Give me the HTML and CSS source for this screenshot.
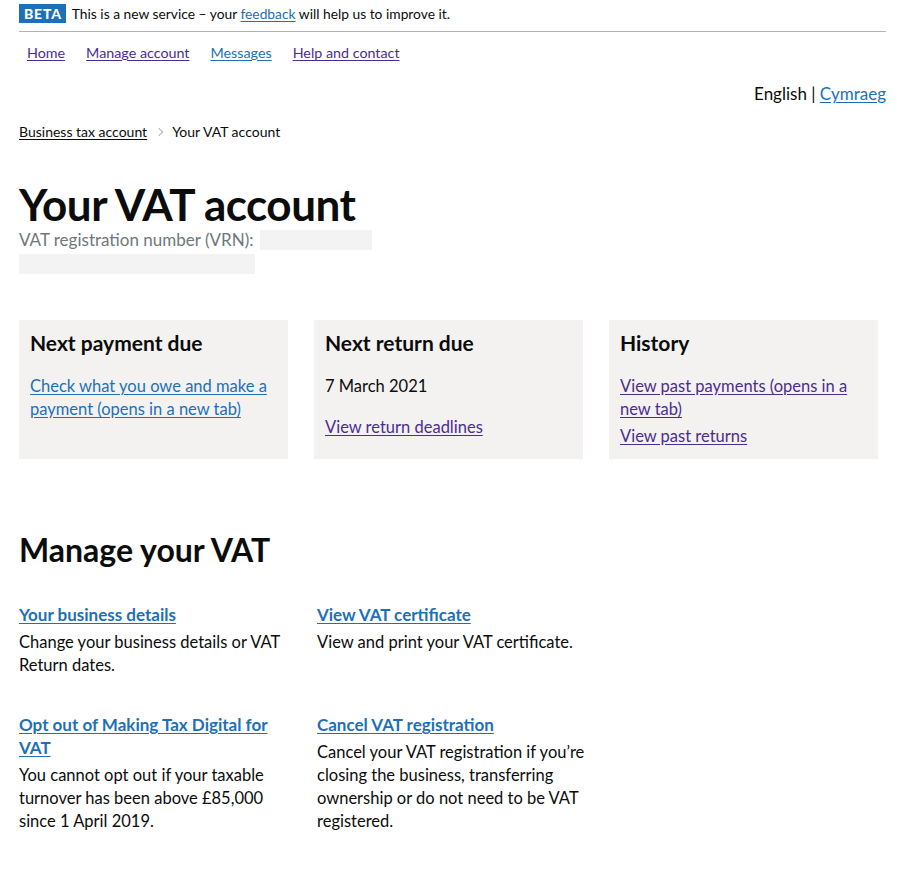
FILE: index.html
```html
<!DOCTYPE html>
<html lang="en">
<head>
<meta charset="utf-8">
<title>Your VAT account</title>
<link rel="stylesheet" href="styles.css">
</head>
<body>
<div class="page">
  <div class="phase">
    <strong class="tag">BETA</strong>
    <span class="phase-text">This is a new service – your <a class="link" href="#">feedback</a> will help us to improve it.</span>
  </div>
  <nav class="nav">
    <a class="visited" href="#">Home</a>
    <a class="visited" href="#">Manage account</a>
    <a class="link" href="#">Messages</a>
    <a class="visited" href="#">Help and contact</a>
  </nav>
  <div class="lang">English | <a class="link" href="#">Cymraeg</a></div>
  <div class="crumbs">
    <a class="crumb-link" href="#">Business tax account</a>
    <span class="chev"></span>
    <span>Your VAT account</span>
  </div>
  <h1 class="title">Your VAT account</h1>
  <div class="vrn">
    <span>VAT registration number (VRN):</span>
    <span class="redact r1"></span>
  </div>
  <div class="redact r2"></div>

  <div class="cards">
    <div class="card">
      <h2 class="card-h">Next payment due</h2>
      <p class="card-p"><a class="link" href="#">Check what you owe and make a payment (opens in a new tab)</a></p>
    </div>
    <div class="card">
      <h2 class="card-h">Next return due</h2>
      <p class="card-p">7 March 2021</p>
      <p class="card-p gap"><a class="visited" href="#">View return deadlines</a></p>
    </div>
    <div class="card">
      <h2 class="card-h">History</h2>
      <p class="card-p"><a class="visited" href="#">View past payments (opens in a new tab)</a></p>
      <p class="card-p small-gap"><a class="visited" href="#">View past returns</a></p>
    </div>
  </div>

  <h2 class="manage-h">Manage your VAT</h2>
  <div class="manage">
    <div class="item">
      <h3 class="item-h"><a class="link" href="#">Your business details</a></h3>
      <p class="item-p">Change your business details or VAT Return dates.</p>
    </div>
    <div class="item">
      <h3 class="item-h"><a class="link" href="#">View VAT certificate</a></h3>
      <p class="item-p">View and print your VAT certificate.</p>
    </div>
    <div class="item">
      <h3 class="item-h"><a class="link" href="#">Opt out of Making Tax Digital for VAT</a></h3>
      <p class="item-p">You cannot opt out if your taxable turnover has been above £85,000 since 1 April 2019.</p>
    </div>
    <div class="item">
      <h3 class="item-h"><a class="link" href="#">Cancel VAT registration</a></h3>
      <p class="item-p">Cancel your VAT registration if you’re closing the business, transferring ownership or do not need to be VAT registered.</p>
    </div>
  </div>
</div>
</body>
</html>
```

FILE: styles.css
```css
* { box-sizing: border-box; }
body {
  margin: 0;
  background: #ffffff;
  color: #0b0c0c;
  font-family: Lato, "Liberation Sans", sans-serif;
}
.page {
  padding: 4px 14px 40px 19px;
}
a { text-underline-offset: 2px; }
.link { color: #1d70b8; }
.visited { color: #4c2c92; }

.phase {
  display: flex;
  align-items: center;
  gap: 6px;
  padding-bottom: 8px;
  border-bottom: 1px solid #b1b4b6;
}
.tag {
  background: #1d70b8;
  color: #fff;
  font-size: 14px;
  font-weight: 900;
  letter-spacing: 0.8px;
  line-height: 19px;
  padding: 0 4px 0 5px;
}
.phase-text { font-size: 13.8px; line-height: 19px; }

.nav {
  display: flex;
  gap: 21px;
  padding: 11px 0 0 8px;
  font-size: 14.3px;
  line-height: 20px;
}

.lang {
  text-align: right;
  font-size: 17px;
  line-height: 20px;
  margin-top: 21px;
}

.crumbs {
  display: flex;
  align-items: center;
  gap: 7px;
  font-size: 14px;
  line-height: 18px;
  margin-top: 19px;
}
.crumb-link { color: #0b0c0c; }
.chev {
  width: 6px;
  height: 6px;
  border-top: 1px solid #b1b4b6;
  border-right: 1px solid #b1b4b6;
  transform: rotate(45deg);
  margin: 0 3px 0 2px;
}

.title {
  font-size: 44px;
  line-height: 48px;
  font-weight: 700;
  margin: 39px 0 0;
  letter-spacing: -0.5px;
}
.vrn {
  display: flex;
  align-items: center;
  gap: 6px;
  color: #6f777b;
  font-size: 17px;
  line-height: 20px;
  margin-top: 2px;
}
.redact {
  display: block;
  background: #f3f3f3;
  height: 20px;
}
.r1 { width: 112px; }
.r2 { width: 236px; margin-top: 4px; }

.cards {
  display: grid;
  grid-template-columns: 269px 269px 269px;
  gap: 26px;
  margin-top: 46px;
}
.card {
  background: #f3f2f1;
  height: 139px;
  padding: 11px 11px 0;
}
.card-h {
  margin: 0;
  font-size: 21px;
  line-height: 24px;
  font-weight: 700;
}
.card-p {
  margin: 20px 0 0;
  font-size: 16.5px;
  line-height: 23px;
}
.card-p.gap { margin-top: 18px; }
.card-p.small-gap { margin-top: 4px; }

.manage-h {
  font-size: 32px;
  line-height: 36px;
  font-weight: 700;
  margin: 73px 0 0;
}
.manage {
  display: grid;
  grid-template-columns: 270px 270px;
  column-gap: 28px;
  row-gap: 36px;
  margin-top: 35px;
}
.item-h {
  margin: 0;
  font-size: 17px;
  line-height: 23px;
  font-weight: 700;
}
.item-p {
  margin: 5px 0 0;
  font-size: 16.5px;
  line-height: 23px;
}
```
